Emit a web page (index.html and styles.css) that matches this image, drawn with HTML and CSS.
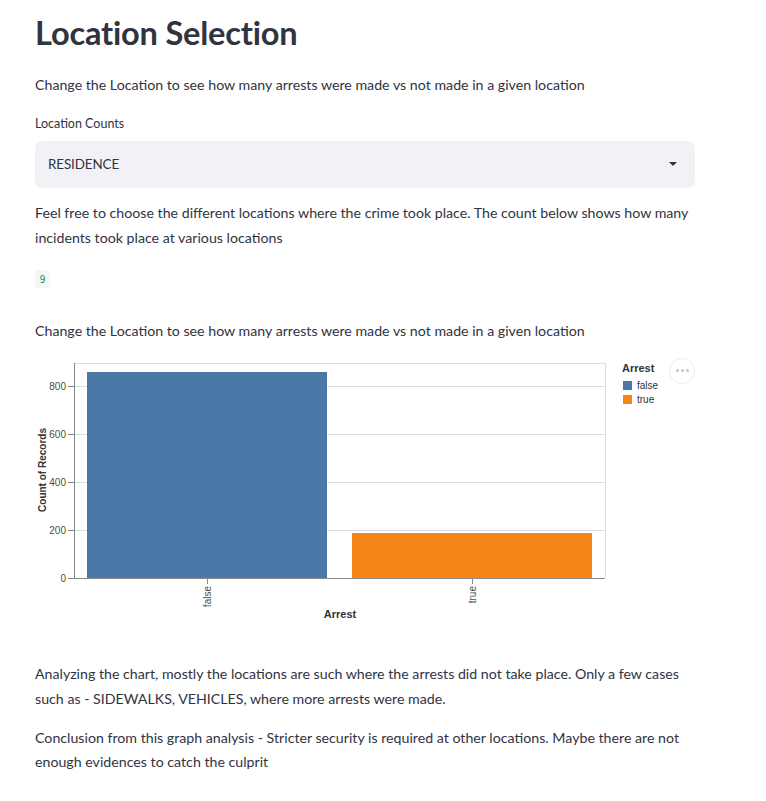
FILE: index.html
```html
<!DOCTYPE html>
<html lang="en">
<head>
<meta charset="utf-8">
<title>Location Selection</title>
<link rel="stylesheet" href="styles.css">
</head>
<body>
<main class="main">
  <h1 class="title">Location Selection</h1>
  <p class="text p1">Change the Location to see how many arrests were made vs not made in a given location</p>
  <div class="label">Location Counts</div>
  <div class="select">
    <span class="select-value">RESIDENCE</span>
    <span class="caret"></span>
  </div>
  <p class="text p2">Feel free to choose the different locations where the crime took place. The count below shows how many incidents took place at various locations</p>
  <div class="badge-row"><code class="badge">9</code></div>
  <p class="text p3">Change the Location to see how many arrests were made vs not made in a given location</p>
  <div class="chart">
    <svg class="chart-svg" width="661" height="275" viewBox="0 0 661 275">
      <g class="grid">
        <line x1="39" y1="8.5" x2="570" y2="8.5"/>
        <line x1="39" y1="31.5" x2="570" y2="31.5"/>
        <line x1="39" y1="79.5" x2="570" y2="79.5"/>
        <line x1="39" y1="127.5" x2="570" y2="127.5"/>
        <line x1="39" y1="175.5" x2="570" y2="175.5"/>
        <line x1="570.5" y1="8" x2="570.5" y2="223"/>
      </g>
      <rect class="bar-false" x="52" y="17" width="240" height="206"/>
      <rect class="bar-true" x="317" y="178" width="240" height="45"/>
      <g class="axis">
        <line x1="39.5" y1="8" x2="39.5" y2="223.5"/>
        <line x1="39" y1="223.5" x2="570" y2="223.5"/>
        <line x1="33" y1="223.5" x2="39" y2="223.5"/>
        <line x1="33" y1="175.5" x2="39" y2="175.5"/>
        <line x1="33" y1="127.5" x2="39" y2="127.5"/>
        <line x1="33" y1="79.5" x2="39" y2="79.5"/>
        <line x1="33" y1="31.5" x2="39" y2="31.5"/>
        <line x1="172.5" y1="223" x2="172.5" y2="229"/>
        <line x1="437.5" y1="223" x2="437.5" y2="229"/>
      </g>
      <g class="tick-label">
        <text x="31" y="227" text-anchor="end">0</text>
        <text x="31" y="179" text-anchor="end">200</text>
        <text x="31" y="131" text-anchor="end">400</text>
        <text x="31" y="83" text-anchor="end">600</text>
        <text x="31" y="35" text-anchor="end">800</text>
        <text transform="translate(176,231) rotate(-90)" text-anchor="end">false</text>
        <text transform="translate(441,231) rotate(-90)" text-anchor="end">true</text>
      </g>
      <text class="axis-title" x="305" y="263" text-anchor="middle">Arrest</text>
      <text class="axis-title y-title" transform="translate(11,115) rotate(-90)" text-anchor="middle">Count of Records</text>
      <text class="axis-title" x="587" y="17">Arrest</text>
      <rect class="bar-false" x="588" y="26" width="9" height="9"/>
      <rect class="bar-true" x="588" y="40" width="9" height="9"/>
      <g class="tick-label legend-label">
        <text x="602" y="34">false</text>
        <text x="602" y="48">true</text>
      </g>
    </svg>
    <button class="more" aria-label="More options"><span></span><span></span><span></span></button>
  </div>
  <p class="text p4">Analyzing the chart, mostly the locations are such where the arrests did not take place. Only a few cases such as - SIDEWALKS, VEHICLES, where more arrests were made.</p>
  <p class="text p5">Conclusion from this graph analysis - Stricter security is required at other locations. Maybe there are not enough evidences to catch the culprit</p>
</main>
</body>
</html>
```

FILE: styles.css
```css
* { box-sizing: border-box; }
html, body { margin: 0; padding: 0; background: #ffffff; }
body {
  font-family: Lato, "Noto Sans", "Liberation Sans", sans-serif;
  color: #31333f;
}
.main {
  width: 766px;
  padding: 13px 0 0 35px;
}
.title {
  margin: 0;
  font-size: 32.6px;
  font-weight: 700;
  line-height: 40px;
  letter-spacing: -0.2px;
  color: #31333f;
}
.text {
  margin: 0;
  font-size: 14.2px;
  line-height: 24.5px;
  width: 660px;
}
.p1 { margin-top: 20px; }
.label {
  margin-top: 16px;
  font-size: 12.5px;
  line-height: 20px;
}
.select {
  margin-top: 7px;
  width: 660px;
  height: 47px;
  background: #f0f2f6;
  border-radius: 7px;
  display: flex;
  align-items: center;
  justify-content: space-between;
  padding: 0 18px 0 13px;
}
.select-value {
  font-size: 13.4px;
  letter-spacing: -0.1px;
}
.caret {
  width: 0;
  height: 0;
  border-left: 4px solid transparent;
  border-right: 4px solid transparent;
  border-top: 4px solid #31333f;
}
.p2 { margin-top: 13.5px; }
.badge-row {
  margin-top: 20px;
  height: 18px;
  display: flex;
}
.badge {
  display: inline-flex;
  align-items: center;
  justify-content: center;
  width: 15px;
  height: 18px;
  border-radius: 4px;
  background: #f5f6f9;
  color: #09ab3b;
  font-family: "DejaVu Sans Mono", "Liberation Mono", monospace;
  font-size: 10px;
}
.p3 { margin-top: 31px; }
.chart {
  position: relative;
  margin-top: 11px;
  width: 661px;
  height: 275px;
}
.chart-svg { display: block; }
.grid line { stroke: #dddddd; stroke-width: 1; }
.axis line { stroke: #888888; stroke-width: 1; }
.bar-false { fill: #4c78a8; }
.bar-true { fill: #f58518; }
.tick-label text {
  font-family: "Liberation Sans", Arial, sans-serif;
  font-size: 10px;
  fill: #4a4a4a;
}
.legend-label text { fill: #333333; }
.axis-title {
  font-family: "Liberation Sans", Arial, sans-serif;
  font-size: 11px;
  font-weight: 700;
  fill: #333333;
}
.y-title { font-size: 10px; }
.more {
  position: absolute;
  left: 634px;
  top: 3px;
  width: 26px;
  height: 26px;
  border-radius: 50%;
  border: 1px solid #ececf0;
  background: #ffffff;
  padding: 0;
  display: flex;
  align-items: center;
  justify-content: center;
  gap: 2px;
}
.more span {
  width: 3px;
  height: 3px;
  border-radius: 50%;
  background: #c4c6cc;
}
.p4 { margin-top: 32.5px; }
.p5 { margin-top: 14.5px; }
```
